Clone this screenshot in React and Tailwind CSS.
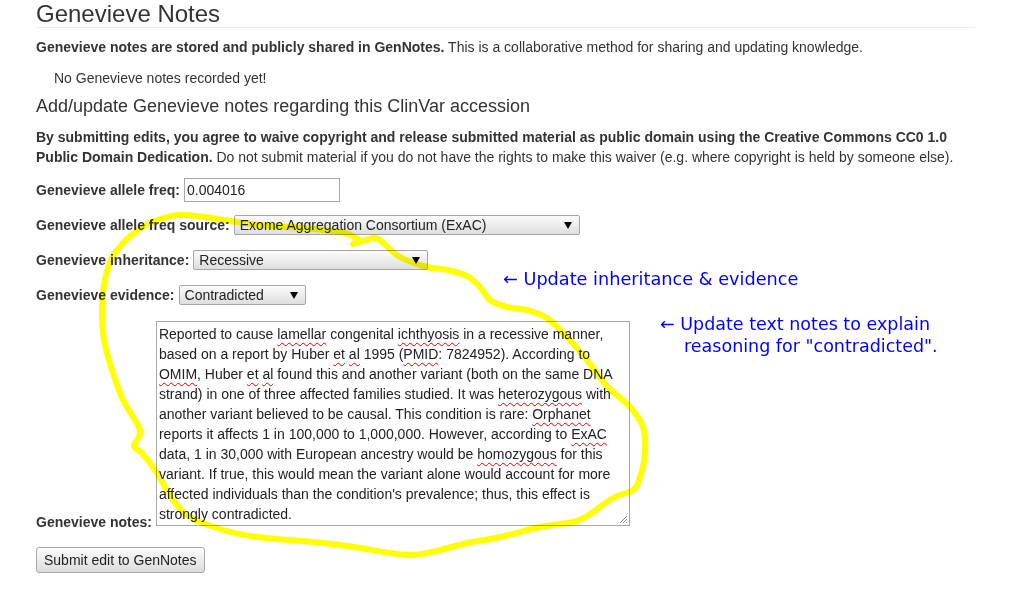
import React from "react";

const notesLines = [
  ["Reported to cause ", ["lamellar"], " congenital ", ["ichthyosis"], " in a recessive manner,"],
  ["based on a report by Huber ", ["et"], " ", ["al"], " 1995 (", ["PMID"], ": 7824952). According to"],
  [["OMIM"], ", Huber ", ["et"], " ", ["al"], " found this and another variant (both on the same DNA"],
  ["strand) in one of three affected families studied. It was ", ["heterozygous"], " with"],
  ["another variant believed to be causal. This condition is rare: ", ["Orphanet"]],
  ["reports it affects 1 in 100,000 to 1,000,000. However, according to ", ["ExAC"]],
  ["data, 1 in 30,000 with European ancestry would be ", ["homozygous"], " for this"],
  ["variant. If true, this would mean the variant alone would account for more"],
  ["affected individuals than the condition's prevalence; thus, this effect is"],
  ["strongly contradicted."],
];

// hand-drawn highlight loop, clockwise from the little hook
const loop = [
  [353, 244], [366, 240], [378, 239], [400, 257], [427, 267], [447, 270], [467, 276],
  [480, 287], [490, 300], [507, 307], [527, 310], [547, 318], [567, 337], [587, 360],
  [607, 386], [630, 407], [643, 427], [645, 453], [640, 477], [633, 490], [613, 498],
  [587, 516], [573, 522], [540, 527], [500, 537], [467, 543], [440, 550], [413, 555],
  [390, 553], [360, 548], [340, 545], [323, 543], [290, 540], [257, 537], [223, 530],
  [190, 517], [173, 500], [157, 473], [142, 453], [134, 446], [140, 430], [123, 400],
  [112, 370], [104, 340], [102, 310], [104, 285], [110, 262], [122, 244], [138, 230],
  [157, 220], [180, 215], [205, 217], [230, 221], [260, 225], [290, 227], [323, 230],
  [345, 233], [358, 239],
];

function smoothPath(pts) {
  let d = `M ${pts[0][0]} ${pts[0][1]}`;
  for (let i = 0; i < pts.length - 1; i++) {
    const p0 = pts[i - 1] || pts[i];
    const p1 = pts[i];
    const p2 = pts[i + 1];
    const p3 = pts[i + 2] || p2;
    const c1x = p1[0] + (p2[0] - p0[0]) / 6;
    const c1y = p1[1] + (p2[1] - p0[1]) / 6;
    const c2x = p2[0] - (p3[0] - p1[0]) / 6;
    const c2y = p2[1] - (p3[1] - p1[1]) / 6;
    d += ` C ${c1x} ${c1y} ${c2x} ${c2y} ${p2[0]} ${p2[1]}`;
  }
  return d;
}

function Select({ className, value }) {
  return (
    <div
      className={`flex h-5 items-center justify-between rounded-[2px] border border-[#a6a6a6] bg-linear-to-b from-[#fbfbfb] to-[#dedede] pl-[5px] pr-[7px] text-[14px] leading-5 text-[#222] ${className}`}
    >
      <span>{value}</span>
      <svg width="8" height="8" viewBox="0 0 8 8">
        <polygon points="0,1 8,1 4,8" fill="#000" />
      </svg>
    </div>
  );
}

export default function App() {
  return (
    <div className="relative isolate min-h-[589px] overflow-hidden bg-white font-['Liberation_Sans',Arial,sans-serif] text-[14px] leading-5 text-[#333]">
      <div className="ml-9 w-[939px]">
        <h1 className="pt-px text-[24px] leading-[26px] border-b border-[#eeeeee]">
          Genevieve Notes
        </h1>
        <p className="mt-[9px]">
          <strong>Genevieve notes are stored and publicly shared in GenNotes.</strong>{" "}
          This is a collaborative method for sharing and updating knowledge.
        </p>
        <p className="mt-[11px] pl-[18px]">No Genevieve notes recorded yet!</p>
        <h2 className="mt-2 text-[18px] leading-5">
          Add/update Genevieve notes regarding this ClinVar accession
        </h2>
        <p className="mt-[11px]">
          <strong>
            By submitting edits, you agree to waive copyright and release submitted
            material as public domain using the Creative Commons CC0 1.0
            <br />
            Public Domain Dedication.
          </strong>{" "}
          Do not submit material if you do not have the rights to make this waiver
          (e.g. where copyright is held by someone else).
        </p>

        <div className="mt-[11px] flex items-center gap-1">
          <label className="font-bold">Genevieve allele freq:</label>
          <div className="flex h-6 w-[156px] items-center border border-[#a9a9a9] px-[2px] text-[#222]">
            0.004016
          </div>
        </div>

        <div className="mt-[13px] flex items-center gap-1">
          <label className="font-bold">Genevieve allele freq source:</label>
          <Select className="w-[346px]" value="Exome Aggregation Consortium (ExAC)" />
        </div>

        <div className="mt-[15px] flex items-center gap-1">
          <label className="font-bold">Genevieve inheritance:</label>
          <Select className="w-[235px]" value="Recessive" />
        </div>

        <div className="mt-[15px] flex items-center gap-1">
          <label className="font-bold">Genevieve evidence:</label>
          <Select className="w-[127px]" value="Contradicted" />
        </div>

        <div className="mt-4 flex items-end gap-1">
          <label className="-mb-[3px] font-bold leading-[14px]">Genevieve notes:</label>
          <div className="relative h-[205px] w-[474px] border border-[#a9a9a9] px-[2px] pt-[2px] text-[#222]">
            {notesLines.map((line, i) => (
              <div key={i} className="whitespace-nowrap">
                {line.map((part, j) =>
                  Array.isArray(part) ? (
                    <span
                      key={j}
                      className="underline decoration-wavy decoration-[#e00000] decoration-1 underline-offset-[3px]"
                    >
                      {part[0]}
                    </span>
                  ) : (
                    <span key={j}>{part}</span>
                  )
                )}
              </div>
            ))}
            <svg className="absolute bottom-px right-px" width="9" height="9" viewBox="0 0 9 9">
              <path d="M1 8 L8 1 M4 8 L8 4 M7 8 L8 7" stroke="#888" strokeWidth="1" />
            </svg>
          </div>
        </div>

        <button className="mt-[21px] h-[26px] rounded-[3px] border border-[#a9a9a9] bg-linear-to-b from-[#fbfbfb] to-[#dcdcdc] px-[7px] text-[14px] leading-5 text-[#222]">
          Submit edit to GenNotes
        </button>
      </div>

      {/* highlighter loop, multiplied so the text stays readable underneath */}
      <svg
        className="pointer-events-none absolute left-0 top-0 mix-blend-multiply"
        width="1010"
        height="589"
        viewBox="0 0 1010 589"
      >
        <path
          d={smoothPath(loop)}
          fill="none"
          stroke="#ffff00"
          strokeWidth="6"
          strokeLinecap="round"
          strokeLinejoin="round"
        />
      </svg>

      <div className="absolute left-[503px] top-[268px] whitespace-nowrap font-['DejaVu_Sans',sans-serif] text-[17.7px] leading-[22px] text-[#0000ff]">
        ← Update inheritance &amp; evidence
      </div>
      <div className="absolute left-[660px] top-[313px] whitespace-nowrap font-['DejaVu_Sans',sans-serif] text-[17.5px] leading-[22px] text-[#0000ff]">
        <div>← Update text notes to explain</div>
        <div className="pl-6">reasoning for "contradicted".</div>
      </div>
    </div>
  );
}
